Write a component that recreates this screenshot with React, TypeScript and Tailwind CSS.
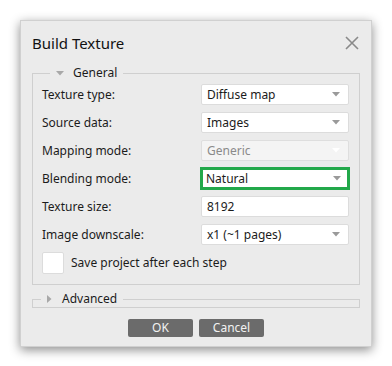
import { ReactNode } from "react";

const Arrow = ({ light }: { light?: boolean }) => (
  <svg width="8" height="5" viewBox="0 0 8 5" className="shrink-0">
    <path d="M0 0h8L4 4.5z" fill={light ? "#ffffff" : "#9a9a9a"} />
  </svg>
);

const Combo = ({ value, disabled, active }: { value: string; disabled?: boolean; active?: boolean }) => (
  <div
    className={
      active
        ? "flex items-center justify-between h-[23px] w-[150px] -mx-px px-[3px] pr-[6px] bg-white border-[3px] border-[#22a84a]"
        : disabled
        ? "flex items-center justify-between h-[21px] w-[148px] px-[5px] pr-[8px] bg-[#f4f4f4] border border-[#dedede] rounded-[2px] text-[#8a8a8a]"
        : "flex items-center justify-between h-[21px] w-[148px] px-[5px] pr-[8px] bg-white border border-[#dcdcdc] rounded-[2px]"
    }
  >
    <span>{value}</span>
    <Arrow light={disabled} />
  </div>
);

const Row = ({ label, children }: { label: string; children: ReactNode }) => (
  <div className="flex items-center justify-between h-[21px]">
    <span>{label}</span>
    {children}
  </div>
);

const App = () => {
  return (
    <div className="w-[392px] h-[366px] bg-white p-[20px] text-[12px] text-[#1b1b1b]" style={{ fontFamily: "'Noto Sans', 'Open Sans', sans-serif" }}>
      <div className="w-[352px] h-[327px] bg-[#ebebeb] border border-[#d0d0d0] shadow-[0_3px_10px_rgba(0,0,0,0.45)] px-[11px] flex flex-col">
        <div className="flex items-center justify-between h-[44px]">
          <span className="text-[15px] text-[#111]">Build Texture</span>
          <svg width="14" height="14" viewBox="0 0 14 14" className="mr-[1px]">
            <path d="M1 1L13 13M13 1L1 13" stroke="#8a8a8a" strokeWidth="1.6" />
          </svg>
        </div>

        <fieldset className="border border-[#cfcfcf] pl-[9px] pr-[10px] pb-[10px]">
          <legend className="ml-[8px] px-[6px] flex items-center gap-[9px] h-[16px]">
            <svg width="8" height="5" viewBox="0 0 8 5">
              <path d="M0 0h8L4 4.5z" fill="#a8a8a8" />
            </svg>
            <span>General</span>
          </legend>
          <div className="flex flex-col gap-[7px] pt-[3px]">
            <Row label="Texture type:">
              <Combo value="Diffuse map" />
            </Row>
            <Row label="Source data:">
              <Combo value="Images" />
            </Row>
            <Row label="Mapping mode:">
              <Combo value="Generic" disabled />
            </Row>
            <Row label="Blending mode:">
              <Combo value="Natural" active />
            </Row>
            <Row label="Texture size:">
              <div className="flex items-center h-[21px] w-[148px] px-[5px] bg-white border border-[#dcdcdc] rounded-[2px]">8192</div>
            </Row>
            <Row label="Image downscale:">
              <Combo value="x1 (~1 pages)" />
            </Row>
            <div className="flex items-center gap-[7px] h-[22px]">
              <div className="w-[22px] h-[22px] bg-white border border-[#dcdcdc] rounded-[2px]" />
              <span>Save project after each step</span>
            </div>
          </div>
        </fieldset>

        <fieldset className="border border-[#cfcfcf] mt-[6px] h-[17px]">
          <legend className="ml-[8px] px-[6px] flex items-center gap-[10px] h-[16px]">
            <svg width="5" height="8" viewBox="0 0 5 8">
              <path d="M0 0v8L4.5 4z" fill="#a8a8a8" />
            </svg>
            <span>Advanced</span>
          </legend>
        </fieldset>

        <div className="flex justify-center gap-[6px] mt-[11px]">
          <button className="w-[65px] h-[18px] bg-[#6b6b6b] text-[#f2f2f2] rounded-[2px] leading-none">OK</button>
          <button className="w-[65px] h-[18px] bg-[#6b6b6b] text-[#f2f2f2] rounded-[2px] leading-none">Cancel</button>
        </div>
      </div>
    </div>
  );
};

export default App;
